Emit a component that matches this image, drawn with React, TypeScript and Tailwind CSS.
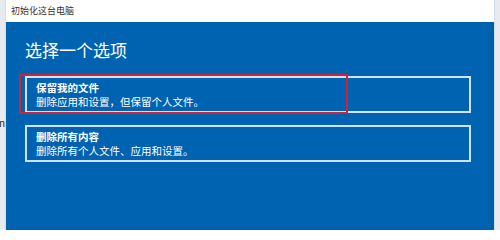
import * as React from "react";

const cjk = { fontFamily: '"Noto Sans CJK SC", "Noto Sans", sans-serif' };

function Option({ title, desc, marked }: { title: string; desc: string; marked?: boolean }) {
  return (
    <div className="relative w-[446px] border-2 border-[#cfe4f8] px-[9px] pt-[3px] pb-[2px] text-white">
      <div className="text-[10.5px] leading-[14px] font-bold">{title}</div>
      <div className="text-[10.5px] leading-[14px]">{desc}</div>
      {marked && (
        <div className="pointer-events-none absolute -left-[8px] -top-[4px] h-[40px] w-[329px] border-2 border-[#d2232f]" />
      )}
    </div>
  );
}

export default function App() {
  return (
    <div className="flex h-[230px] w-[500px] overflow-hidden bg-[#e7ebf0]" style={cjk}>
      {/* 背景窗口残留 */}
      <div className="w-[5px] overflow-hidden pt-[117px] text-[10px] leading-[12px] text-[#222]">
        <span className="-ml-[1px] block">n</span>
      </div>
      <div className="flex w-[490px] flex-col border-x border-[#cddff0]">
        <div className="flex h-[22px] items-center bg-white pl-[5px] text-[9px] text-[#333]">初始化这台电脑</div>
        <div className="flex flex-1">
          <div className="flex-1 bg-[#0063b1] pl-[19px] pt-[17px]">
            <h1 className="text-[17px] leading-[22px] text-white">选择一个选项</h1>
            <div className="mt-[15px] flex flex-col gap-[12px]">
              <Option title="保留我的文件" desc="删除应用和设置，但保留个人文件。" marked />
              <Option title="删除所有内容" desc="删除所有个人文件、应用和设置。" />
            </div>
          </div>
          <div className="w-[4px] bg-[#005da8]" />
        </div>
      </div>
    </div>
  );
}
